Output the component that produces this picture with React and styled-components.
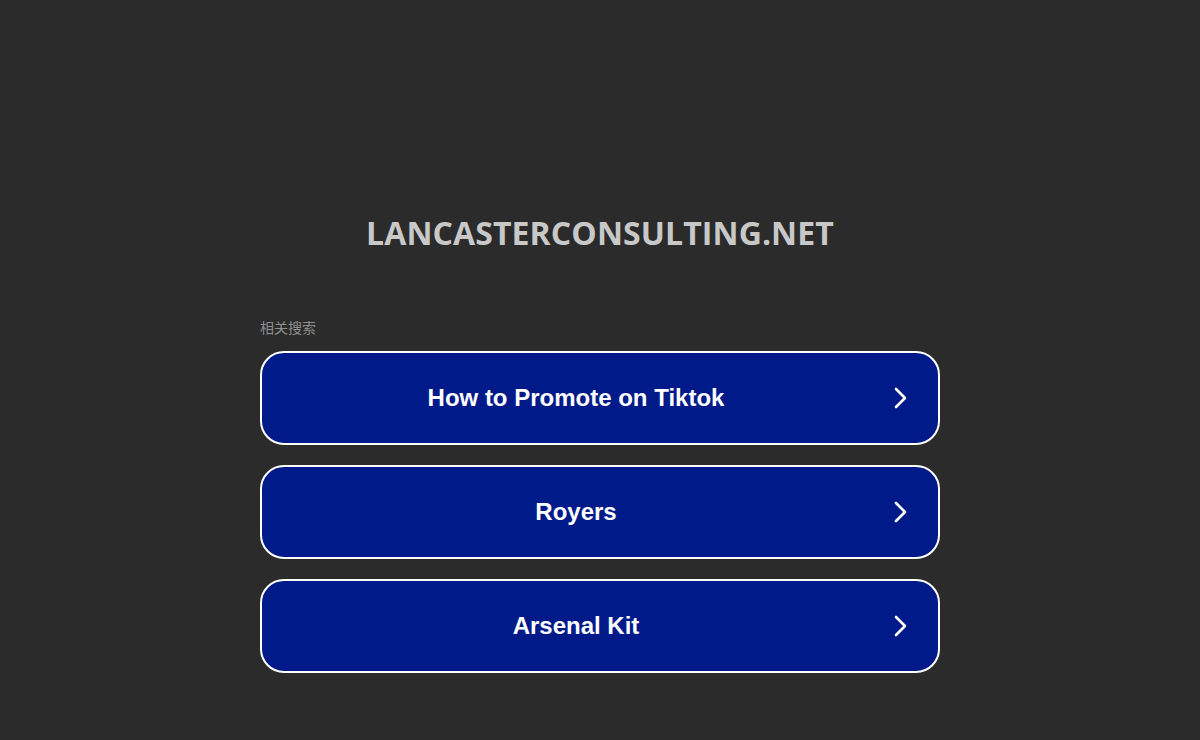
import React from 'react'
import styled, { createGlobalStyle } from 'styled-components'

const GlobalStyle = createGlobalStyle`
  html, body {
    margin: 0;
    padding: 0;
    background: #2b2b2b;
  }
  body {
    font-family: "Liberation Sans", Arial, sans-serif;
  }
`

const Page = styled.div`
  min-height: 740px;
  display: flex;
  flex-direction: column;
  align-items: center;
  padding-top: 212px;
  box-sizing: border-box;
`

const Domain = styled.h1`
  margin: 0;
  font-family: "Open Sans", "Noto Sans", sans-serif;
  font-weight: 700;
  font-size: 32px;
  line-height: 42px;
  color: #c8c8c8;
  letter-spacing: 0.1px;
`

const Related = styled.section`
  width: 680px;
  margin-top: 63px;
  display: flex;
  flex-direction: column;
`

const Heading = styled.div`
  font-family: "Noto Sans CJK SC", sans-serif;
  font-size: 14px;
  line-height: 20px;
  color: #8f8f8f;
  margin-bottom: 14px;
`

const List = styled.div`
  display: flex;
  flex-direction: column;
  gap: 20px;
`

const LinkButton = styled.a`
  position: relative;
  display: flex;
  align-items: center;
  justify-content: center;
  height: 94px;
  box-sizing: border-box;
  border: 2px solid #ffffff;
  border-radius: 24px;
  background: #011a8a;
  color: #ffffff;
  text-decoration: none;
  font-family: "Liberation Sans", Arial, sans-serif;
  font-weight: 700;
  font-size: 24px;
  padding-right: 48px;
`

const Chevron = styled.svg`
  position: absolute;
  right: 29px;
  top: 50%;
  transform: translateY(-50%);
`

const items = ['How to Promote on Tiktok', 'Royers', 'Arsenal Kit']

export default function App() {
  return (
    <>
      <GlobalStyle />
      <Page>
        <Domain>LANCASTERCONSULTING.NET</Domain>
        <Related>
          <Heading>相关搜索</Heading>
          <List>
            {items.map((item) => (
              <LinkButton key={item} href="#">
                {item}
                <Chevron width="16" height="24" viewBox="0 0 16 24">
                  <path d="M3 3 L12 12 L3 21" fill="none" stroke="#fff" strokeWidth="2.6" strokeLinecap="round" strokeLinejoin="round" />
                </Chevron>
              </LinkButton>
            ))}
          </List>
        </Related>
      </Page>
    </>
  )
}
